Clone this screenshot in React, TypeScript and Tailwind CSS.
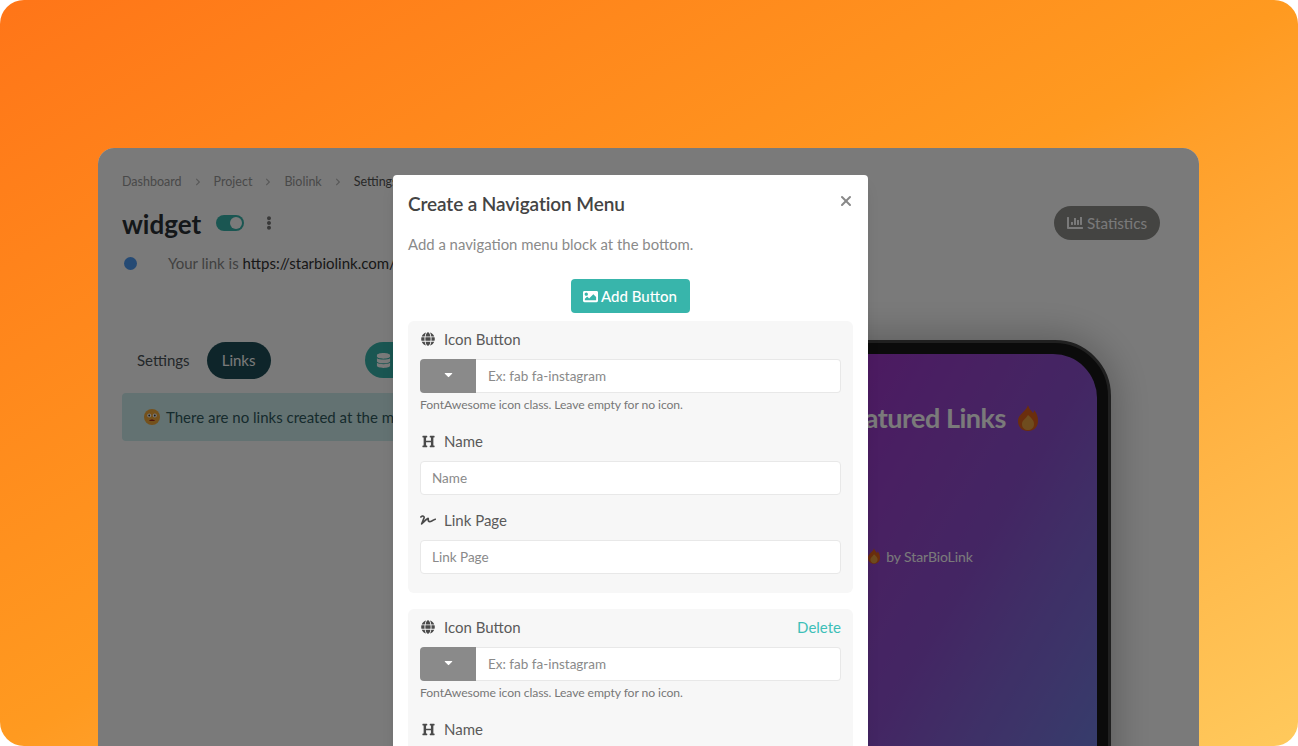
import { FaChartBar, FaCaretDown, FaChevronRight, FaDatabase, FaEllipsisV, FaGlobe, FaHeading, FaImage, FaSignature } from "react-icons/fa";
import { X } from "lucide-react";

const Flame = ({ className }: { className: string }) => (
  <svg viewBox="0 0 20 26" className={className}>
    <path d="M10 0c1 4 3 5 5 8 1-1 1-2 1-3 3 3 4 7 4 11 0 6-4 10-10 10S0 22 0 16C0 9 8 7 10 0z" fill="#e0601c" />
    <path d="M10 10c3 3 6 5 6 9 0 4-3 6-6 6s-6-2-6-6c0-4 4-5 6-9z" fill="#e8a040" />
  </svg>
);

const Face = () => (
  <svg viewBox="0 0 16 16" className="w-4 h-4 shrink-0">
    <circle cx="8" cy="8" r="8" fill="#f2a93b" />
    <circle cx="5.2" cy="6.5" r="2" fill="#fff" />
    <circle cx="10.8" cy="6.5" r="2" fill="#fff" />
    <circle cx="5.2" cy="6.5" r="0.9" fill="#333" />
    <circle cx="10.8" cy="6.5" r="0.9" fill="#333" />
    <path d="M5 12c1-2 5-2 6 0z" fill="#a3261c" />
  </svg>
);

const Sep = () => <FaChevronRight size={8} className="mx-[12px] text-[#bbb]" />;

const Label = ({ icon, text, action }: { icon: React.ReactNode; text: string; action?: string }) => (
  <div className="flex items-center h-[20px] pb-[2px] text-[15px] text-[#5a5a5a]">
    <span className="w-[16px] flex justify-center text-[#4a4a4a] mr-[8px]">{icon}</span>
    <span>{text}</span>
    {action && <span className="ml-auto text-[#3dbfb8]">{action}</span>}
  </div>
);

const TextInput = ({ placeholder }: { placeholder: string }) => (
  <input
    placeholder={placeholder}
    className="block w-full h-[34px] px-[11px] bg-white border border-[#e8e8e8] rounded-[4px] text-[13.5px] placeholder:text-[#8a8a8a] outline-none"
  />
);

const IconRow = () => (
  <>
    <div className="flex h-[34px] mt-[9px]">
      <div className="w-[56px] shrink-0 bg-[#8a8a8a] rounded-l-[4px] flex items-center justify-center pb-[3px] text-white">
        <FaCaretDown size={13} />
      </div>
      <input
        placeholder="Ex: fab fa-instagram"
        className="w-full h-full px-[12px] bg-white border border-[#e8e8e8] border-l-0 rounded-r-[4px] text-[13.5px] placeholder:text-[#8a8a8a] outline-none"
      />
    </div>
    <p className="mt-[4px] text-[12.2px] leading-[16px] tracking-[-0.1px] text-[#777]">FontAwesome icon class. Leave empty for no icon.</p>
  </>
);

export default function App() {
  return (
    <div className="relative w-[1298px] h-[746px] overflow-hidden rounded-[24px] bg-gradient-to-br from-[#ff7518] via-[#ff9a20] to-[#ffc95c] pt-[148px] px-[98px] font-['Lato',sans-serif]">
      <div className="relative w-[1101px] h-[598px] bg-white rounded-t-[16px] overflow-hidden">
        {/* page behind the dialog */}
        <div className="px-[24px] pt-[25px]">
          <div className="flex items-center h-[18px] text-[12.5px] text-[#999]">
            <span>Dashboard</span>
            <Sep />
            <span>Project</span>
            <Sep />
            <span>Biolink</span>
            <Sep />
            <span className="text-[#555]">Settings</span>
          </div>
          <div className="flex items-center h-[34px] mt-[15px]">
            <span className="mt-[3px] text-[26px] font-bold text-[#2a3036]">widget</span>
            <span className="ml-[15px] w-[28px] h-[16px] rounded-full bg-[#38b5ab] flex items-center justify-end pr-[2px]">
              <span className="w-[12px] h-[12px] rounded-full bg-white" />
            </span>
            <span className="ml-[18px] text-[#777]"><FaEllipsisV size={14} /></span>
            <span className="ml-auto mr-[15px] h-[34px] rounded-full bg-[#8e8e8a] text-white flex items-center gap-[4px] px-[13px] text-[15.2px]">
              <FaChartBar size={16} /> Statistics
            </span>
          </div>
          <div className="flex items-center h-[20px] mt-[13px] text-[15px] text-[#888]">
            <span className="ml-[2px] w-[13px] h-[13px] rounded-full bg-[#4f9bf2]" />
            <span className="ml-[31px] whitespace-nowrap">Your link is <span className="text-[#333]">https://starbiolink.com/widget</span></span>
          </div>
          <div className="flex items-center h-[38px] mt-[68px] text-[15px]">
            <span className="ml-[15px] text-[#4a5258]">Settings</span>
            <span className="ml-[17px] w-[64px] h-[37px] rounded-full bg-[#1f4f58] text-white flex items-center justify-center">Links</span>
            <span className="ml-[94px] w-[70px] h-[36px] rounded-full bg-[#38b5ab] text-white flex items-center pl-[11px]"><FaDatabase size={15} /></span>
          </div>
          <div className="flex items-center gap-[6px] w-[700px] h-[48px] mt-[14px] rounded-[4px] bg-[#cfeeee] pl-[22px] text-[15px] text-[#2f5a5f]">
            <Face />
            <span>There are no links created at the moment.</span>
          </div>
        </div>

        {/* phone preview */}
        <div className="absolute left-[650px] top-[192px] w-[363px] h-[600px] rounded-[56px] border-[3px] border-[#444] bg-[#181818] p-[11px] shadow-[0_0_40px_rgba(0,0,0,0.3)]">
          <div className="relative h-full rounded-[44px] bg-gradient-to-br from-[#a826c8] via-[#8d50d0] to-[#5a90e8] text-white">
            <div className="flex items-center justify-center gap-[12px] pt-[44px] ml-[16px] text-[27px] font-bold tracking-[-0.5px] whitespace-nowrap">
              Featured Links <Flame className="w-[20px] h-[26px]" />
            </div>
            <div className="flex items-center justify-center gap-[6px] mt-[107px] ml-[-18px] text-[14px] tracking-[-0.1px] whitespace-nowrap">
              <Flame className="w-[12px] h-[16px]" /> by StarBioLink
            </div>
          </div>
        </div>

        <div className="absolute inset-0 bg-black/[.52]" />

        {/* dialog */}
        <div className="absolute left-[295px] top-[27px] w-[475px] h-[640px] bg-white rounded-[4px] px-[15px] shadow-lg">
          <div className="flex items-center justify-between h-[26px] mt-[16px]">
            <h2 className="text-[19px] font-semibold tracking-[-0.1px] text-[#444]">Create a Navigation Menu</h2>
            <X size={16} strokeWidth={3} className="text-[#888] mr-[-1px] mt-[-7px]" />
          </div>
          <p className="mt-[16px] h-[20px] text-[14.9px] text-[#8a8a8a]">Add a navigation menu block at the bottom.</p>
          <div className="flex justify-center mt-[26px]">
            <button className="h-[34px] w-[119px] ml-[-1px] rounded-[4px] bg-[#38b5ab] text-white text-[15px] font-medium flex items-center justify-center gap-[3px]">
              <FaImage size={15} /> Add Button
            </button>
          </div>

          <div className="mt-[8px] h-[272px] bg-[#f7f7f7] rounded-[6px] px-[12px] pt-[9px]">
            <Label icon={<FaGlobe size={14} />} text="Icon Button" />
            <IconRow />
            <div className="mt-[19px]"><Label icon={<FaHeading size={13} />} text="Name" /></div>
            <div className="mt-[9px]"><TextInput placeholder="Name" /></div>
            <div className="mt-[16px]"><Label icon={<FaSignature size={16} />} text="Link Page" /></div>
            <div className="mt-[9px]"><TextInput placeholder="Link Page" /></div>
          </div>

          <div className="mt-[16px] h-[272px] bg-[#f7f7f7] rounded-[6px] px-[12px] pt-[9px]">
            <Label icon={<FaGlobe size={14} />} text="Icon Button" action="Delete" />
            <IconRow />
            <div className="mt-[19px]"><Label icon={<FaHeading size={13} />} text="Name" /></div>
          </div>
        </div>
      </div>
    </div>
  );
}
